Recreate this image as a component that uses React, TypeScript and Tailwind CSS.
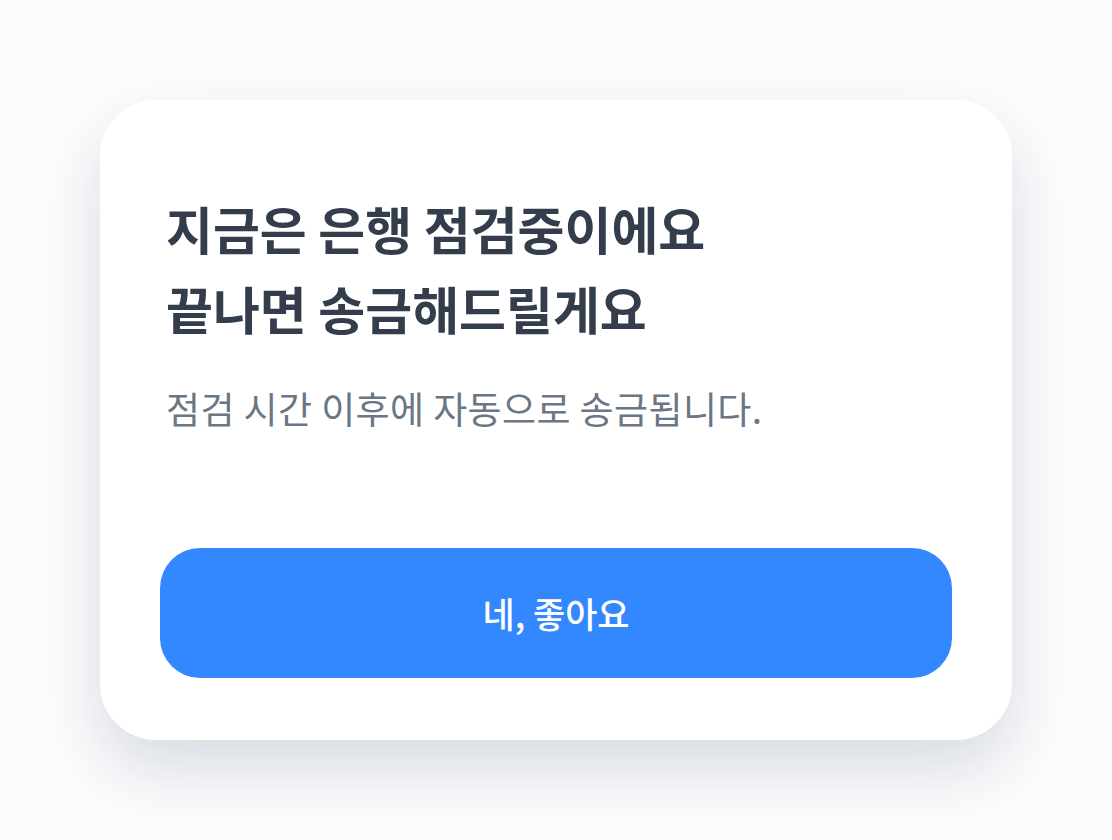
export default function App() {
  return (
    <div
      className="flex min-h-screen items-center justify-center bg-[#fcfcfd]"
      style={{ fontFamily: '"Noto Sans CJK KR", "Noto Sans", sans-serif' }}
    >
      <div className="flex w-[912px] flex-col rounded-[56px] bg-white px-[60px] pt-[88px] pb-[62px] shadow-[0_30px_64px_rgba(2,32,71,0.15)]">
        <div className="px-[6px]">
          <h1 className="text-[51px] font-bold leading-[80px] text-[#333d4b]">
            지금은 은행 점검중이에요
            <br />
            끝나면 송금해드릴게요
          </h1>
          <p className="mt-[36px] text-[37px] leading-[48px] tracking-[0.4px] text-[#6b7684]">
            점검 시간 이후에 자동으로 송금됩니다.
          </p>
        </div>
        <button
          type="button"
          className="mt-[116px] flex h-[130px] w-full items-center justify-center rounded-[40px] bg-[#3388ff] text-[35px] font-medium text-white"
        >
          네, 좋아요
        </button>
      </div>
    </div>
  );
}
